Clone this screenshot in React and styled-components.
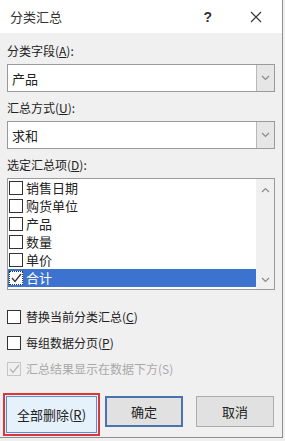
import React from "react";
import styled, { createGlobalStyle } from "styled-components";

const items = ["销售日期", "购货单位", "产品", "数量", "单价", "合计"];

export default function App() {
  return (
    <>
      <GlobalStyle />
      <Dialog>
        <TitleBar>
          <Title>分类汇总</Title>
          <TitleButtons>
            <HelpMark>?</HelpMark>
            <CloseMark>
              <svg width="12" height="12" viewBox="0 0 12 12">
                <path d="M1 1L11 11M11 1L1 11" stroke="#333" strokeWidth="1.1" />
              </svg>
            </CloseMark>
          </TitleButtons>
        </TitleBar>
        <Body>
          <Label>
            分类字段(<u>A</u>):
          </Label>
          <Combo>
            <ComboText>产品</ComboText>
            <ComboArrow>
              <Chevron />
            </ComboArrow>
          </Combo>
          <Label>
            汇总方式(<u>U</u>):
          </Label>
          <Combo>
            <ComboText>求和</ComboText>
            <ComboArrow>
              <Chevron />
            </ComboArrow>
          </Combo>
          <Label>
            选定汇总项(<u>D</u>):
          </Label>
          <ListBox>
            <ListItems>
              {items.map((name) => {
                const last = name === "合计";
                return (
                  <ListRow key={name} $selected={last}>
                    <Box $focus={last}>{last && <Tick color="#333" />}</Box>
                    <RowText>{name}</RowText>
                  </ListRow>
                );
              })}
            </ListItems>
            <ScrollBar>
              <Chevron up />
              <Chevron />
            </ScrollBar>
          </ListBox>
          <Options>
            <Option>
              <Box />
              <span>
                替换当前分类汇总(<u>C</u>)
              </span>
            </Option>
            <Option>
              <Box />
              <span>
                每组数据分页(<u>P</u>)
              </span>
            </Option>
            <Option $disabled>
              <Box $disabled>
                <Tick color="#b5b5b5" />
              </Box>
              <span>汇总结果显示在数据下方(S)</span>
            </Option>
          </Options>
          <ButtonRow>
            <Marked>
              <Button $hover>
                全部删除(<u>R</u>)
              </Button>
            </Marked>
            <Button $primary>确定</Button>
            <Button>取消</Button>
          </ButtonRow>
        </Body>
      </Dialog>
    </>
  );
}

function Chevron({ up }) {
  return (
    <svg width="9" height="6" viewBox="0 0 9 6">
      <path
        d={up ? "M1 5L4.5 1.5L8 5" : "M1 1L4.5 4.5L8 1"}
        stroke="#8a8a8a"
        strokeWidth="1.2"
        fill="none"
      />
    </svg>
  );
}

function Tick({ color }) {
  return (
    <svg width="11" height="10" viewBox="0 0 11 10">
      <path d="M1 5L4 8.5L10 1" stroke={color} strokeWidth="1.3" fill="none" />
    </svg>
  );
}

const GlobalStyle = createGlobalStyle`
  body {
    margin: 0;
    background: #f0f0f0;
    font-family: "Noto Sans CJK SC", "Liberation Sans", sans-serif;
    font-size: 12px;
    color: #222;
  }
  u {
    text-underline-offset: 1px;
  }
`;

const Dialog = styled.div`
  width: 282px;
  height: 437px;
  background: #f0f0f0;
  border-right: 1px solid #8f8f8f;
  border-bottom: 1px solid #8f8f8f;
  display: flex;
  flex-direction: column;
`;

const TitleBar = styled.div`
  height: 33px;
  flex-shrink: 0;
  background: #fff;
  display: flex;
  align-items: center;
  justify-content: space-between;
  padding-left: 10px;
`;

const Title = styled.div`
  font-size: 13px;
  color: #333;
`;

const TitleButtons = styled.div`
  display: flex;
  align-items: center;
  gap: 38px;
  padding-right: 20px;
`;

const HelpMark = styled.span`
  font-family: "Liberation Sans", sans-serif;
  font-size: 14px;
  font-weight: bold;
  color: #333;
`;

const CloseMark = styled.span`
  display: flex;
`;

const Body = styled.div`
  padding: 10px 7px 0 7px;
  display: flex;
  flex-direction: column;
`;

const Label = styled.div`
  height: 16px;
  line-height: 16px;
  margin-bottom: 5px;
`;

const Combo = styled.div`
  width: 268px;
  height: 28px;
  flex-shrink: 0;
  box-sizing: border-box;
  border: 1px solid #9a9a9a;
  background: #fff;
  display: flex;
  margin-bottom: 8px;
`;

const ComboText = styled.div`
  flex: 1;
  padding-left: 4px;
  display: flex;
  align-items: center;
  font-size: 13px;
`;

const ComboArrow = styled.div`
  width: 17px;
  background: #e6e6e6;
  border-left: 1px solid #b8b8b8;
  display: flex;
  align-items: center;
  justify-content: center;
`;

const ListBox = styled.div`
  width: 268px;
  height: 112px;
  flex-shrink: 0;
  box-sizing: border-box;
  border: 1px solid #9a9a9a;
  background: #fff;
  display: flex;
`;

const ListItems = styled.div`
  flex: 1;
  display: flex;
  flex-direction: column;
`;

const ListRow = styled.div`
  height: 18px;
  display: flex;
  align-items: center;
  gap: 3px;
  padding-left: 1px;
  background: ${(p) => (p.$selected ? "#3b73cf" : "transparent")};
  color: ${(p) => (p.$selected ? "#fff" : "#222")};
  font-size: 13px;
`;

const RowText = styled.span`
  line-height: 18px;
`;

const Box = styled.span`
  width: 14px;
  height: 14px;
  box-sizing: border-box;
  border: 1px ${(p) => (p.$focus ? "dotted" : "solid")}
    ${(p) => (p.$disabled ? "#c6c6c6" : "#333")};
  background: ${(p) => (p.$disabled ? "#f0f0f0" : "#fff")};
  display: flex;
  align-items: center;
  justify-content: center;
  flex-shrink: 0;
`;

const ScrollBar = styled.div`
  width: 18px;
  background: #f0f0f0;
  display: flex;
  flex-direction: column;
  align-items: center;
  justify-content: space-between;
  padding: 8px 0 6px;
`;

const Options = styled.div`
  display: flex;
  flex-direction: column;
  gap: 9px;
  padding-top: 18px;
`;

const Option = styled.div`
  height: 17px;
  display: flex;
  align-items: center;
  gap: 5px;
  color: ${(p) => (p.$disabled ? "#a9a9a9" : "#222")};
`;

const ButtonRow = styled.div`
  display: flex;
  align-items: flex-start;
  gap: 13px;
  margin-top: 16px;
  margin-left: -4px;
`;

const Marked = styled.div`
  border: 2px solid #d9363e;
  padding: 1px;
  margin-right: -8px;
`;

const Button = styled.div`
  width: ${(p) => (p.$hover ? "91px" : "78px")};
  height: ${(p) => (p.$hover ? "37px" : "31px")};
  margin-top: ${(p) => (p.$hover ? "0" : "3px")};
  box-sizing: border-box;
  display: flex;
  align-items: center;
  justify-content: center;
  background: ${(p) => (p.$hover ? "#e5f1fb" : "#e1e1e1")};
  border: ${(p) =>
    p.$primary
      ? "2px solid #4a74b0"
      : p.$hover
      ? "1px solid #5a8fd0"
      : "1px solid #adadad"};
  font-size: 13px;
`;
